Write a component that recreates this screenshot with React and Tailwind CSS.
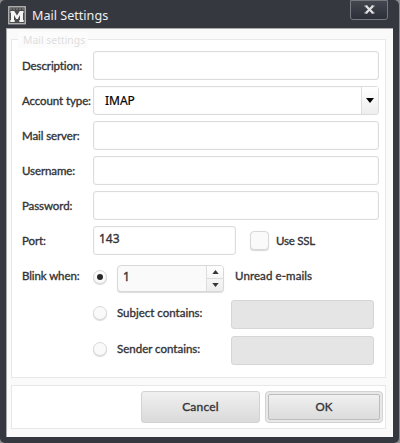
import React from "react";

const label = "w-[71px] shrink-0 whitespace-nowrap tracking-[-0.1px]";
const field = "h-[29px] rounded-[3px] border border-[#dcdcdc] bg-white shadow-[inset_0_0_1px_#d8d8d8]";

function Row({ name, children, h = "h-[35px]" }) {
  return (
    <div className={`flex items-center ${h}`}>
      <div className={label}>{name}</div>
      {children}
    </div>
  );
}

function Radio({ checked }) {
  return (
    <div className="mt-[2px] flex h-[14px] w-[14px] shrink-0 items-center justify-center rounded-full border border-[#dadada] bg-[#fafafa] shadow-[0_1px_1px_#dadada]">
      {checked && <div className="h-[6px] w-[6px] rounded-full bg-[#292929]" />}
    </div>
  );
}

function AppIcon() {
  return (
    <svg width="18" height="19" viewBox="0 0 18 19">
      <rect x="0.75" y="0.75" width="16.5" height="17" fill="#4c4c4e" stroke="#b9b9b9" strokeWidth="1.3" />
      <path d="M2 3H16" stroke="#8b8b8d" strokeDasharray="2 1" />
      <path d="M2.5 5H6.2L9 9.5L11.8 5H15.5V7H15V14H15.7V16H11.3V14H12V9L9.8 13H8.2L6 9V14H6.7V16H2.3V14H3V7H2.5Z" fill="#f4f4f4" />
    </svg>
  );
}

function Arrow({ up, className }) {
  return (
    <svg className={className} viewBox="0 0 8 5">
      <path d={up ? "M0 5L4 0L8 5Z" : "M0 0H8L4 5Z"} fill="currentColor" />
    </svg>
  );
}

export default function App() {
  return (
    <div className="h-[443px] w-[400px] overflow-hidden bg-[#8d8d90] pr-px font-['Lato','Noto_Sans',sans-serif] text-[11.5px] font-normal leading-4 text-[#333335] [-webkit-text-stroke:0.35px_#333335] [font-variant-ligatures:none]">
      <div className="h-[443px] rounded-[5px] bg-[#363840] px-[6px]">
        <div className="flex h-[28px] items-start justify-between">
          <div className="ml-[2px] mt-[6px] flex items-center">
            <AppIcon />
            <span className="ml-[6px] whitespace-nowrap font-['Noto_Sans',sans-serif] text-[12.6px] font-normal text-[#eeeeef] [-webkit-text-stroke:0px]">Mail Settings</span>
          </div>
          <div className="mr-[5px] flex h-[20px] w-[38px] items-center justify-center rounded-b-[3px] border border-[#777980] bg-linear-to-b from-[#454750] to-[#2d2f38]">
            <svg className="mt-[-1px]" width="11" height="9" viewBox="0 0 11 9">
              <path d="M2 1L9 8M9 1L2 8" stroke="#e0e0e2" strokeWidth="2.3" />
              <path d="M0.5 1H3.5M7.5 1H10.5M0.5 8H3.5M7.5 8H10.5" stroke="#e0e0e2" strokeWidth="1.2" />
            </svg>
          </div>
        </div>
        <div className="h-[409px] border-l border-t border-[#a9a9ac] bg-[#fafafa] pl-[4px] pr-[7px] pt-[10px]">
          <div className="h-[339px] w-[375px] border border-[#e8e8e8] bg-white pl-[10px]">
            <div className="-mt-[8px] ml-[-4px] flex h-[16px] w-[70px] items-center bg-[#fcfcfc] pl-[5px] font-['Noto_Sans',sans-serif] text-[10.4px] font-normal whitespace-nowrap text-[#dedede] [-webkit-text-stroke:0px]">Mail settings</div>
            <Row name="Description:"><div className={`${field} w-[286px]`} /></Row>
            <Row name="Account type:">
              <div className={`${field} flex w-[286px] items-center justify-between`}>
                <span className="pl-[11px] font-['Noto_Sans',sans-serif] text-[12px] text-black [-webkit-text-stroke:0.2px_black]">IMAP</span>
                <div className="flex h-full w-[17px] items-center justify-center border-l border-[#dddddd] bg-linear-to-b from-white to-[#eeeeee] text-black">
                  <Arrow className="h-[5px] w-[8px]" />
                </div>
              </div>
            </Row>
            <Row name="Mail server:"><div className={`${field} w-[286px]`} /></Row>
            <Row name="Username:"><div className={`${field} w-[286px]`} /></Row>
            <Row name="Password:"><div className={`${field} w-[286px]`} /></Row>
            <Row name="Port:">
              <div className={`${field} w-[143px] pl-[5px] pt-[4px] font-['Noto_Sans',sans-serif] text-[12px]`}>143</div>
              <div className="ml-[14px] h-[19px] w-[19px] rounded-[4px] border border-[#d8d8d8] bg-[#fafafa] shadow-[0_1px_1px_#d8d8d8]" />
              <span className="ml-[7px] tracking-[-0.25px]">Use SSL</span>
            </Row>
            <Row name="Blink when:" h="h-[36px]">
              <Radio checked />
              <div className="ml-[10px] mt-[4px] flex h-[27px] w-[107px] items-center justify-between overflow-hidden rounded-[4px] border border-[#d8d8d8] bg-[#fafafa] shadow-[0_1px_1px_#dcdcdc]">
                <span className="mt-[-3px] pl-[5px] font-['Noto_Sans',sans-serif] text-[12px]">1</span>
                <div className="flex h-full w-[17px] flex-col border-l border-[#dddddd] bg-linear-to-b from-white to-[#ededed] text-[#353535]">
                  <div className="flex flex-1 items-center justify-center border-b border-[#dddddd]"><Arrow up className="h-[4px] w-[7px]" /></div>
                  <div className="flex flex-1 items-center justify-center"><Arrow className="h-[4px] w-[7px]" /></div>
                </div>
              </div>
              <span className="ml-[11px] tracking-[0.1px]">Unread e-mails</span>
            </Row>
            <Row h="h-[36px]">
              <Radio />
              <span className="ml-[10px] mt-[1px] w-[114px]">Subject contains:</span>
              <div className="mt-[5px] h-[29px] w-[143px] rounded-[3px] border border-[#d6d6d6] bg-[#e5e5e5]" />
            </Row>
            <Row h="h-[36px]">
              <Radio />
              <span className="ml-[10px] mt-[1px] w-[114px]">Sender contains:</span>
              <div className="mt-[5px] h-[29px] w-[143px] rounded-[3px] border border-[#d6d6d6] bg-[#e5e5e5]" />
            </Row>
          </div>
          <div className="mt-[7px] flex h-[44px] w-[375px] items-center justify-end gap-[5px] border border-[#e8e8e8] bg-white pr-[2px]">
            <div className="flex h-[32px] w-[119px] items-center justify-center rounded-[3px] border border-[#d2d2d2] bg-linear-to-b from-[#f0f0f1] to-[#dadada] text-[12px] tracking-[0.2px]">Cancel</div>
            <div className="h-[32px] w-[118px] rounded-[4px] border border-[#d2d2d2] bg-[#e8e8e8] p-[2px]">
              <div className="flex h-full items-center justify-center rounded-[2px] border border-[#bdbdbd] bg-linear-to-b from-[#f0f0f1] to-[#dcdcdc] text-[11.5px]">OK</div>
            </div>
          </div>
        </div>
      </div>
    </div>
  );
}
